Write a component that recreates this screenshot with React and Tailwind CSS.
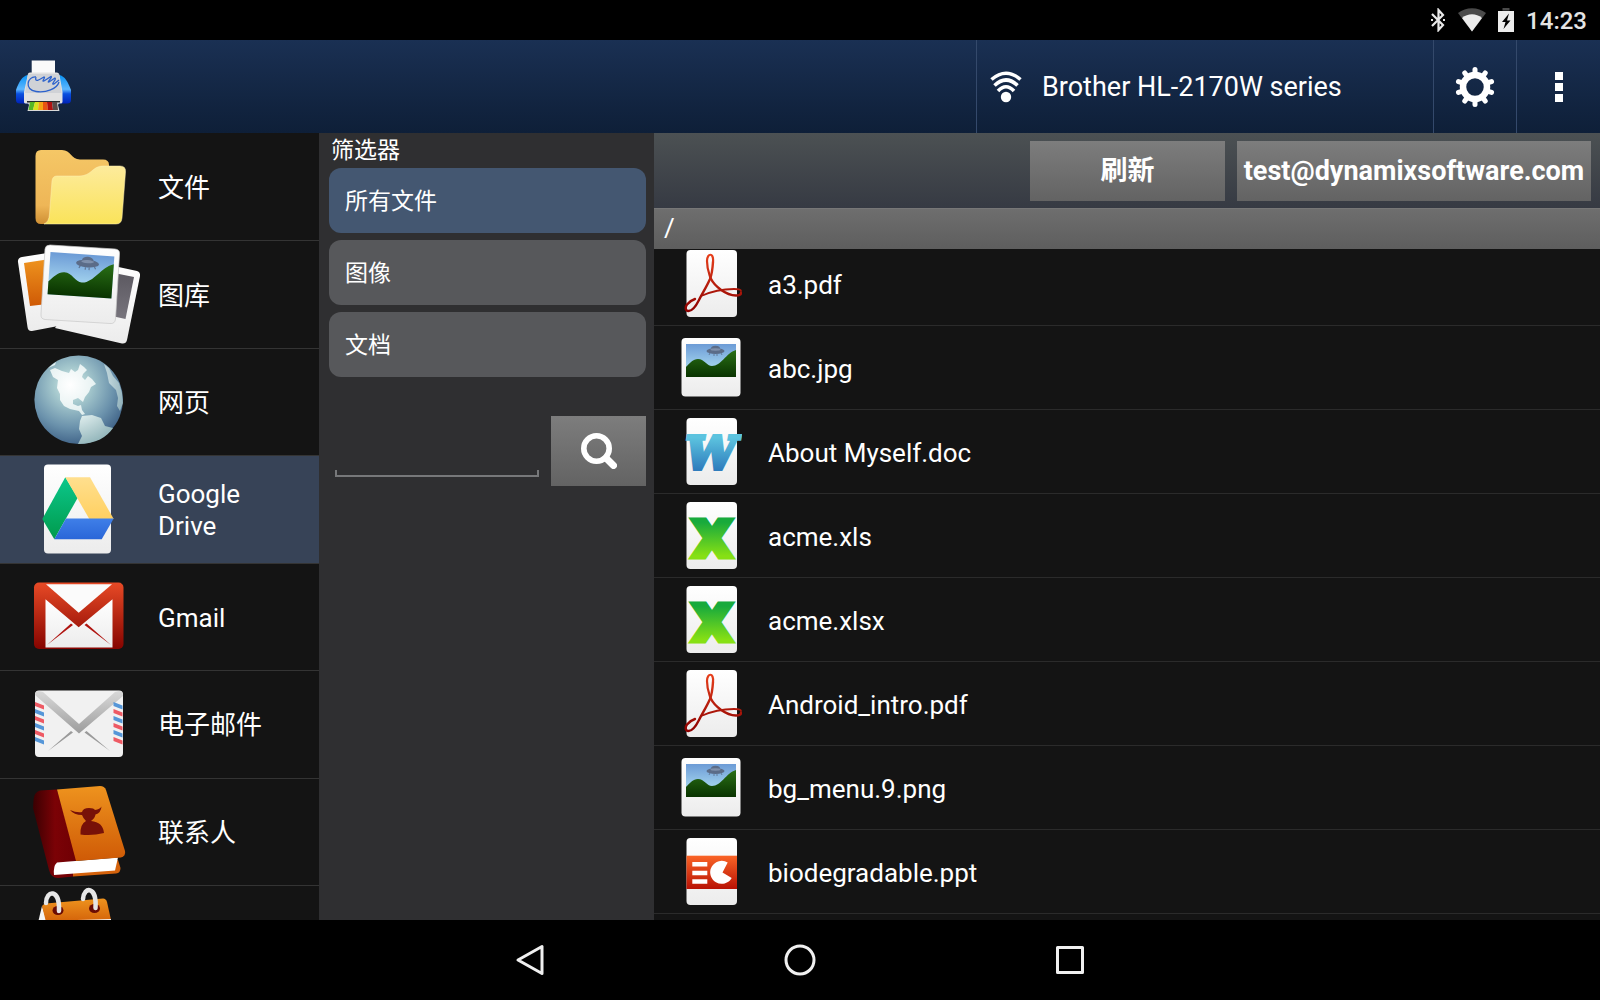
// src/App.jsx

import React, { useState } from 'react';

// Gradients shared by all the icons below
const IconDefs = () => (
    <svg className="absolute h-0 w-0" aria-hidden="true">
        <defs>
            <linearGradient id="paper" x1="0" y1="0" x2="0" y2="1">
                <stop offset="0" stopColor="#ffffff" />
                <stop offset="1" stopColor="#ececec" />
            </linearGradient>
            <linearGradient id="sky" x1="0" y1="0" x2="0" y2="1">
                <stop offset="0" stopColor="#6c9bd6" />
                <stop offset="0.7" stopColor="#a3d3ee" />
            </linearGradient>
            <linearGradient id="hills" x1="0" y1="0" x2="0" y2="1">
                <stop offset="0" stopColor="#2a7016" />
                <stop offset="1" stopColor="#093300" />
            </linearGradient>
            <linearGradient id="folderBack" x1="0" y1="0" x2="0" y2="1">
                <stop offset="0" stopColor="#f5c766" />
                <stop offset="0.75" stopColor="#eeb657" />
                <stop offset="1" stopColor="#cf8f34" />
            </linearGradient>
            <linearGradient id="folderFront" x1="0" y1="0" x2="0" y2="1">
                <stop offset="0" stopColor="#fdeb9c" />
                <stop offset="1" stopColor="#fae35a" />
            </linearGradient>
            <linearGradient id="orange" x1="0" y1="0" x2="0" y2="1">
                <stop offset="0" stopColor="#ee931e" />
                <stop offset="1" stopColor="#cf5a06" />
            </linearGradient>
            <linearGradient id="gray" x1="0" y1="0" x2="0" y2="1">
                <stop offset="0" stopColor="#5b5860" />
                <stop offset="1" stopColor="#77747c" />
            </linearGradient>
            <radialGradient id="globe" cx="0.42" cy="0.34" r="0.68">
                <stop offset="0" stopColor="#d9efec" />
                <stop offset="0.3" stopColor="#a5c8cd" />
                <stop offset="0.7" stopColor="#6b92ac" />
                <stop offset="1" stopColor="#3f6287" />
            </radialGradient>
            <radialGradient id="land" gradientUnits="userSpaceOnUse" cx="70" cy="36" r="64">
                <stop offset="0" stopColor="#ffffff" />
                <stop offset="0.5" stopColor="#e0eeee" />
                <stop offset="1" stopColor="#8fb3b8" />
            </radialGradient>
            <linearGradient id="driveGreen" x1="0" y1="0" x2="0" y2="1">
                <stop offset="0" stopColor="#0cc78b" />
                <stop offset="1" stopColor="#009a4c" />
            </linearGradient>
            <linearGradient id="driveYellow" x1="0" y1="0" x2="0" y2="1">
                <stop offset="0" stopColor="#ffdf8e" />
                <stop offset="1" stopColor="#ffd061" />
            </linearGradient>
            <linearGradient id="driveBlue" x1="0" y1="0" x2="0" y2="1">
                <stop offset="0" stopColor="#3f7fe8" />
                <stop offset="1" stopColor="#2a66d8" />
            </linearGradient>
            <linearGradient id="gmailRed" x1="0" y1="0" x2="0" y2="1">
                <stop offset="0" stopColor="#e74a26" />
                <stop offset="1" stopColor="#860400" />
            </linearGradient>
            <linearGradient id="flap" x1="0" y1="0" x2="0" y2="1">
                <stop offset="0" stopColor="#d9d9d9" />
                <stop offset="1" stopColor="#9c9c9c" />
            </linearGradient>
            <linearGradient id="spine" x1="0" y1="0" x2="1" y2="0">
                <stop offset="0" stopColor="#3a0002" />
                <stop offset="0.5" stopColor="#7b0206" />
                <stop offset="1" stopColor="#6f0004" />
            </linearGradient>
            <linearGradient id="pdfRed" gradientUnits="userSpaceOnUse" x1="0" y1="12" x2="0" y2="70">
                <stop offset="0" stopColor="#e8401c" />
                <stop offset="1" stopColor="#8c0000" />
            </linearGradient>
            <linearGradient id="wordBlue" x1="0" y1="0" x2="0" y2="1">
                <stop offset="0.2" stopColor="#5cc3df" />
                <stop offset="0.8" stopColor="#2f7dbd" />
            </linearGradient>
            <linearGradient id="excelGreen" x1="0" y1="0" x2="0" y2="1">
                <stop offset="0.2" stopColor="#18aa3c" />
                <stop offset="0.8" stopColor="#86e014" />
            </linearGradient>
            <linearGradient id="pptRed" x1="0" y1="0" x2="0" y2="1">
                <stop offset="0" stopColor="#fa6426" />
                <stop offset="1" stopColor="#b81205" />
            </linearGradient>
            <linearGradient id="wing" x1="0" y1="0" x2="0" y2="1">
                <stop offset="0" stopColor="#0a93f5" />
                <stop offset="0.5" stopColor="#5db7ff" />
                <stop offset="0.66" stopColor="#0a50e0" />
                <stop offset="1" stopColor="#0022b8" />
            </linearGradient>
        </defs>
    </svg>
);

// 50x33 landscape with a flying saucer, used by the photo icons
const Landscape = () => (
    <>
        <rect width="50" height="33" fill="url(#sky)" />
        <path d="M0 23 C4 19 7 15 12 15 C18 15 21 22 26 22 C35 22 40 9 50 6 V33 H0 Z" fill="url(#hills)" />
        <g fill="#5b6c88">
            <ellipse cx="29.500" cy="7" rx="9" ry="3" />
            <ellipse cx="29.500" cy="4.500" rx="4.500" ry="2.800" />
            <path d="M24 9 l-1 2 M28 10 v2 M31 10 v2 M35 9 l1 2" stroke="#5b6c88" strokeWidth="0.800" />
        </g>
        <ellipse cx="29.500" cy="5.500" rx="5" ry="1.200" fill="#7f90ab" />
    </>
);

const FolderIcon = () => (
    <>
        <path d="M41 16 H62 C71 16 71 25.500 80 25.500 H103 Q109 25.500 109 31 V84 Q109 90 103 90 H41 Q35.500 90 35.500 84 V22 Q35.500 16 41 16 Z" fill="url(#folderBack)" />
        <path d="M57 42 H79 C92 42 92 32 103 32 H120 Q126 32 125.500 38 L122 84 Q121.500 90 116 90 H44 Q49 88 49.500 80 L52 47 Q52.500 42 57 42 Z" fill="url(#folderFront)" stroke="#fff0b5" strokeWidth="0.500" />
    </>
);

const GalleryIcon = () => (
    <>
        <path d="M22 16 L60 10 L74 82 L32 90 Q28 90.500 27.500 86 L18 21 Q17.500 17 22 16 Z" fill="url(#paper)" />
        <path d="M24 22 L50 18 L56 62 L30 65 Z" fill="url(#orange)" />
        <path d="M100 22 L137 30 Q140.500 31 140 35 L127 99 Q126 103 122 102.500 L55 87 Z" fill="url(#paper)" />
        <path d="M104 30 L134 36 L125.500 78 L98 72 Z" fill="url(#gray)" />
        <path d="M50 4 L115 8 Q120 8.500 119.500 13 L115.500 78 Q115 83 110 82.500 L45 78.500 Q40.500 78 41 73 L45 8 Q45.500 4 50 4 Z" fill="url(#paper)" stroke="#c9c9c9" strokeWidth="0.700" />
        <g transform="translate(50.500 11) rotate(4) scale(1.280)">
            <Landscape />
        </g>
    </>
);

const GlobeIcon = () => (
    <>
        <circle cx="78.700" cy="50.700" r="44.300" fill="url(#globe)" />
        <path d="M50 21 L55 19 L62 22 L69 24 L71 20 L75 23 L78 21 L80 15 L84 18 L87 21 L83 25 L82 28 L85 31 L88 27 L92 30 L96 35 L91 38 L89 43 L85 48 L83 53 L78 49 L73 51 L73 55 L78 57 L81 56 L82 61 L85 65 L82 66 L79 62 L70 60 L64 57 L60 51 L60 45 L57 39 L58 31 L53 28 Z" fill="url(#land)" />
        <path d="M82 67 L92 66 L101 69 L105 77 L113 79 C107 88 96 95 78 95 L82 87 L79 80 L80 72 Z" fill="url(#land)" />
        <path d="M104 15 L109 19 L113 27 L119 34 L122 44 L123 54 L120 62 L117 57 L118 49 L116 41 L109 34 L107 24 Z" fill="url(#land)" opacity="0.800" />
        <path d="M48 19 L56 13 L55 16 Z" fill="url(#land)" />
    </>
);

const DriveIcon = () => (
    <>
        <rect x="44" y="8.500" width="67" height="89" rx="4" fill="url(#paper)" />
        <path d="M65.300 21.300 L77.700 41.700 L54.300 83.300 L42.300 63 Z" fill="url(#driveGreen)" />
        <path d="M65.300 21.300 H90 L113.700 63 H89.300 Z" fill="url(#driveYellow)" />
        <path d="M66 62.600 H113.700 L101.700 83.300 H54.300 Z" fill="url(#driveBlue)" />
    </>
);

const GmailIcon = () => (
    <>
        <rect x="34" y="19.500" width="89.500" height="66.500" rx="5" fill="url(#gmailRed)" />
        <path d="M46 21.300 H112 L78.700 49.700 Z" fill="#fbfbfb" />
        <path d="M45.500 36.300 L78.700 64.300 L112.500 36.300 V84.500 H45.500 Z" fill="url(#paper)" />
        <path d="M71 60.500 L73 62 L47 82 Z M86.500 60.500 L84.500 62 L111 82 Z" fill="#b01410" />
    </>
);

const MailIcon = () => (
    <>
        <rect x="35" y="19.500" width="88" height="66.500" rx="4" fill="#f1f1f1" />
        <path d="M35 24 Q35 20 39 20 L43 21 L79 53 L115 21 L119 20 Q123 20 123 25 L79 62.500 Z" fill="url(#flap)" />
        <path d="M71 60 L73 61.500 L48 80 Z M86.500 60 L84.500 61.500 L110 80 Z" fill="#9a9a9a" />
        {[0, 1, 2, 3, 4, 5].map((i) => (
            <g key={i} transform={`translate(0 ${i * 7})`}>
                <path d="M35 31 L44 34.500 V38.500 L35 35 Z" fill={i % 2 ? '#5596d8' : '#ee5a64'} />
                <path d="M113.500 31 L122.500 34.500 V38.500 L113.500 35 Z" fill={i % 2 ? '#ee5a64' : '#5596d8'} />
            </g>
        ))}
    </>
);

const ContactsIcon = () => (
    <>
        <path d="M118 82 L120.500 90 Q120.500 95 116 95.500 L73 98.500 L70 88 Z" fill="#d4620c" />
        <path d="M57 11.500 L40 12.500 Q34 14 33.500 22 L33 30 L49 92 Q51 100 58 100 L73 98.500 V84 L77 82 Z" fill="url(#spine)" />
        <path d="M57 84.500 L118 79.500 L115 92.500 L54 97 Q53 88 57 84.500 Z" fill="#ffffff" />
        <path d="M57 11.500 L100 8 Q104.500 8 106 12 L125 73 Q126 78 121 79.500 L76 83 Z" fill="url(#orange)" />
        <path d="M70 32 Q77 35 82 34 Q83 30 89 30 Q94 30 95 32 Q100 31 101.500 28.500 Q101 35 95.500 36.500 Q95 40 91 43 Q103 44 104 55 Q92 58 80.500 56.500 Q80 46 86 43 Q83 40 82 37 Q74 37 70 32 Z" fill="#771108" />
    </>
);

const CalendarIcon = () => (
    <>
        <path d="M42 20 L36 45 H50 Z" fill="#f4f4f4" />
        <path d="M46 17.500 L103 12.500 Q106 12.500 107 16 L111 34 L110 40 H47 L42 20 Q43 18 46 17.500 Z" fill="url(#orange)" />
        <path d="M60 34.500 L111 33 V40 H58 Z" fill="#f4f4f4" />
        <ellipse cx="58" cy="24.500" rx="5.500" ry="4.500" fill="#6a0c04" />
        <ellipse cx="94.500" cy="22.500" rx="5.500" ry="4.500" fill="#6a0c04" />
        <path d="M46 17 C46 4 60 2 59 25 M83 13 C84 0 97 0 95.500 22" fill="none" stroke="#e6e6e6" strokeWidth="4.500" strokeLinecap="round" />
    </>
);

const Page = () => <rect x="6.500" y="8" width="50.500" height="67" rx="4" fill="url(#paper)" />;

const PdfIcon = () => (
    <>
        <Page />
        <g fill="none" stroke="url(#pdfRed)" strokeLinecap="round">
            <path d="M33 20 C34 10 27 11 27 19 C27 27 29 31 30.500 36" strokeWidth="2.200" />
            <path d="M33 20 C32.500 28 32 32 30 37 C27 44 22 52 19 58 C16 64 12 69 8.500 69 C5 69 5 65 7 62.500 C9 60 12 58 15 57" strokeWidth="2.400" />
            <path d="M30.500 36 C35 45 46 53 56 53.500 C59 53.500 61 52.500 61 51" strokeWidth="2.400" />
            <path d="M21 54 C30 50 44 47 54 47 C58 47 61 47.500 61 49" strokeWidth="1.800" />
        </g>
    </>
);

const ImageIcon = () => (
    <>
        <rect x="1.500" y="12" width="59" height="58.500" rx="4" fill="url(#paper)" />
        <g transform="translate(6 18)">
            <Landscape />
        </g>
    </>
);

const WordIcon = () => (
    <>
        <Page />
        <text x="31" y="59" textAnchor="middle" className="text-[45px] font-bold italic [font-family:'DejaVu_Serif',serif]" fill="url(#wordBlue)" stroke="url(#wordBlue)" strokeWidth="4">W</text>
    </>
);

const ExcelIcon = () => (
    <>
        <Page />
        <text x="32" y="62" textAnchor="middle" className="text-[48px] font-bold [font-family:'DejaVu_Sans',sans-serif]" fill="url(#excelGreen)" stroke="url(#excelGreen)" strokeWidth="7">X</text>
    </>
);

const PptIcon = () => (
    <>
        <Page />
        <rect x="6.500" y="25.700" width="50.500" height="33.300" fill="url(#pptRed)" />
        <path d="M12.300 32 h15 v4.500 h-15 Z M12.300 40.700 h15 v4.500 h-15 Z M12.300 49.200 h15 v4.500 h-15 Z" fill="#ffffff" />
        <path d="M47.700 32.500 A11.500 11.500 0 1 0 51.700 48 L42.500 42.500 Z" fill="#ffffff" />
    </>
);

const sources = [
    { label: '文件', Icon: FolderIcon },
    { label: '图库', Icon: GalleryIcon },
    { label: '网页', Icon: GlobeIcon },
    { label: 'Google Drive', Icon: DriveIcon },
    { label: 'Gmail', Icon: GmailIcon },
    { label: '电子邮件', Icon: MailIcon },
    { label: '联系人', Icon: ContactsIcon },
];

const filters = ['所有文件', '图像', '文档'];

const files = [
    { name: 'a3.pdf', Icon: PdfIcon },
    { name: 'abc.jpg', Icon: ImageIcon },
    { name: 'About Myself.doc', Icon: WordIcon },
    { name: 'acme.xls', Icon: ExcelIcon },
    { name: 'acme.xlsx', Icon: ExcelIcon },
    { name: 'Android_intro.pdf', Icon: PdfIcon },
    { name: 'bg_menu.9.png', Icon: ImageIcon },
    { name: 'biodegradable.ppt', Icon: PptIcon },
];

const StatusBar = () => (
    <div className="flex h-10 shrink-0 items-center justify-end bg-black pr-[13px]">
        <svg className="mr-3 h-6 w-4" viewBox="0 0 16 24" fill="none" stroke="#e8e8e8" strokeWidth="2.200">
            <path d="M2 6 L13 17 L8.500 22 V2 L13 7 L2 18" />
            <path d="M1 12 h2 M13 12 h2" />
        </svg>
        <svg className="mr-3 h-6 w-7" viewBox="0 0 28 24">
            <path d="M0 5 C8 -1.500 20 -1.500 28 5 L14 23.500 Z" fill="#4a4a4a" />
            <path d="M4 10 C10 5 18 5 24 10 L14 23.500 Z" fill="#ececec" />
        </svg>
        <svg className="mr-3 h-6 w-4" viewBox="0 0 16 24">
            <path d="M4.500 0 h7 v2.500 h-7 Z" fill="#4a4a4a" />
            <path d="M0 3 h16 v21 H0 Z" fill="#ececec" />
            <path d="M11 5.500 L4 14 H7.500 L5.500 21 L12.500 12.500 H9 Z" fill="#000000" />
        </svg>
        <time className="pt-[2px] text-[24px] leading-8 font-medium text-[#e4e4e4]">14:23</time>
    </div>
);

const Header = () => (
    <header className="flex h-[93px] shrink-0 bg-linear-to-b from-[#1a3053] to-[#0e1f38]">
        <div className="flex-1">
            <svg className="h-[93px] w-[90px]" viewBox="0 0 90 93" role="img" aria-label="PrintHand">
                <path d="M28 35 C22 36 19 42 16 50 V60 Q16 64 21 63.500 H30 Z" fill="url(#wing)" />
                <path d="M59 35 C65 36 68 42 71 50 V60 Q71 64 66 63.500 H57 Z" fill="url(#wing)" />
                <path d="M31.700 20.500 H55 V35 H31.700 Z" fill="#fafafa" />
                <path d="M28 34 Q28 32.500 30 32.500 H57 Q59 32.500 59.500 35 L62.500 52 V62 Q62.500 63.500 60 63.500 H27 Q24 63.500 24 62 V52 Z" fill="#e2e2e2" />
                <path d="M28 34 H59 L61.500 53 H25 Z" fill="#d0d2d6" />
                <path d="M36 37 C27 36 24 50 36 51.500 C46 53 57 49 59 42 M36 37 C34 44 42 38 44 37 C46 37 41 42 44 41 L51 36.500 C53 37 46 43 49 42 L55 38 C57 39 50 45 54 44 L59 40" fill="none" stroke="#2c62cc" strokeWidth="1.300" />
                <path d="M27 61 H60 L58 65 L59.500 71 H27.500 L29 65 Z" fill="#d9d9d9" />
                <path d="M27 61 H60 V62.500 H27 Z" fill="#26282c" />
                <path d="M30 62 H35 L33 70 H28.500 Z" fill="#56b524" />
                <path d="M35 62 H39 L38 70 H33 Z" fill="#d8e01c" />
                <path d="M39 62 H43 V70 H38 Z" fill="#f5a313" />
                <path d="M43 62 H47 L48 70 H43 Z" fill="#e85312" />
                <path d="M47 62 H52 L53 70 H48 Z" fill="#b01010" />
                <path d="M52 62 H57 L58 70 H53 Z" fill="#5a4a48" />
            </svg>
        </div>
        <button className="flex w-[457px] items-center gap-5 border-l border-[#34496b] pl-[13px] text-left text-[27px] text-white">
            <svg className="h-8 w-8" viewBox="0 0 32 32" fill="none" stroke="#ffffff" strokeWidth="3.600">
                <path d="M1.500 8.500 Q16 -4 30.500 8.500" />
                <path d="M4.500 14.500 Q16 3.500 27.500 14.500" />
                <path d="M8 20 Q16 11.500 24 20" />
                <circle cx="16" cy="26" r="5.200" fill="#ffffff" stroke="none" />
            </svg>
            <span className="pt-[2px]">Brother HL-2170W series</span>
        </button>
        <button className="flex w-[83px] items-center justify-center border-l border-[#34496b]" aria-label="设置">
            <svg className="h-10 w-10" viewBox="-20 -20 40 40" fill="none" stroke="#ffffff">
                <circle r="12" strokeWidth="6.500" />
                {[0, 36, 72, 108, 144, 180, 216, 252, 288, 324].map((deg) => (
                    <path key={deg} d="M0 -14 V-17.400" strokeWidth="5" strokeLinecap="round" transform={`rotate(${deg})`} />
                ))}
            </svg>
        </button>
        <button className="flex w-[84px] flex-col items-center justify-center gap-[3px] border-l border-[#34496b]" aria-label="更多">
            <span className="h-2 w-2 bg-white" />
            <span className="h-2 w-2 bg-white" />
            <span className="h-2 w-2 bg-white" />
        </button>
    </header>
);

const SourceList = ({ active, onSelect }) => (
    <nav className="flex w-[319px] shrink-0 flex-col overflow-hidden bg-[#141414] pt-px">
        {sources.map(({ label, Icon }) => (
            <button
                key={label}
                onClick={() => onSelect(label)}
                className={`flex min-h-0 flex-1 items-center border-b border-[#343434] text-left text-[26px] leading-8 text-white ${active === label ? 'bg-[#374357]' : ''}`}
            >
                <svg className="h-[107px] w-[158px] shrink-0" viewBox="0 0 158 107">
                    <Icon />
                </svg>
                <span className="pt-[2px] pr-8">{label}</span>
            </button>
        ))}
        {/* Next entry, only its top is in view */}
        <button className="h-[34px] shrink-0 overflow-hidden" aria-label="日历">
            <svg className="h-[107px] w-[158px]" viewBox="0 0 158 107">
                <CalendarIcon />
            </svg>
        </button>
    </nav>
);

const FilterPanel = ({ active, onSelect }) => (
    <aside className="w-[335px] shrink-0 bg-[#2f2f31] pr-2 pl-[10px] text-[23px] text-white">
        <h2 className="h-[35px] pl-[2px] leading-[35px]">筛选器</h2>
        <div className="flex flex-col gap-[7px]">
            {filters.map((label) => (
                <button
                    key={label}
                    onClick={() => onSelect(label)}
                    className={`h-[65px] rounded-xl px-4 pt-1 text-left ${active === label ? 'bg-[#445771]' : 'bg-[#57585b]'}`}
                >
                    {label}
                </button>
            ))}
        </div>
        <form className="mt-[39px] flex items-end gap-3" onSubmit={(e) => e.preventDefault()}>
            <div className="mb-[9px] ml-[6px] min-w-0 flex-1">
                <input type="text" aria-label="搜索" className="block h-10 w-full bg-transparent px-2 outline-none" />
                <div className="h-[7px] border-x-2 border-b-2 border-[#77787a]" />
            </div>
            <button aria-label="搜索" className="flex h-[70px] w-[95px] items-center justify-center bg-linear-to-b from-[#7d7d7d] to-[#636363]">
                <svg className="h-9 w-9" viewBox="0 0 36 36" fill="none" stroke="#ffffff">
                    <circle cx="15.500" cy="15.500" r="12.700" strokeWidth="5.600" />
                    <path d="M25 25 L32.500 32.500" strokeWidth="7" strokeLinecap="round" />
                </svg>
            </button>
        </form>
    </aside>
);

const FileBrowser = () => (
    <main className="flex min-w-0 flex-1 flex-col bg-[#141414] text-white">
        <div className="flex h-[75px] shrink-0 items-center justify-end gap-3 bg-linear-to-b from-[#4c5153] to-[#363a43] pr-[9px] text-[27px] font-bold">
            <button className="h-[60px] w-[195px] bg-linear-to-b from-[#7d7d7d] to-[#636363] pt-[2px]">刷新</button>
            <button className="h-[60px] w-[354px] bg-linear-to-b from-[#7d7d7d] to-[#636363] pt-[2px]">test@dynamixsoftware.com</button>
        </div>
        <div className="h-[41px] shrink-0 border-t border-[#777777] bg-linear-to-b from-[#6e6e6e] to-[#5e5e5e] pl-[10px] text-[26px] leading-[38px]">/</div>
        <div className="min-h-0 flex-1 overflow-hidden">
            {/* List is scrolled down by a few pixels */}
            <ul className="-mt-[7px]">
                {files.map(({ name, Icon }) => (
                    <li key={name} className="border-b border-[#2b2b2b]">
                        <button className="flex h-[83px] w-full items-center gap-[26px] pl-[26px] text-left text-[26px]">
                            <svg className="h-[84px] w-[62px] shrink-0" viewBox="0 0 62 84">
                                <Icon />
                            </svg>
                            <span className="pt-[3px]">{name}</span>
                        </button>
                    </li>
                ))}
            </ul>
        </div>
    </main>
);

const NavigationBar = () => (
    <footer className="flex h-20 shrink-0 items-center justify-center bg-black">
        <button aria-label="返回" className="flex w-[270px] justify-center">
            <svg className="h-8 w-8" viewBox="0 0 32 32" fill="none" stroke="#f0f0f0" strokeWidth="3" strokeLinejoin="round">
                <path d="M28 2.500 V29.500 L4 16 Z" />
            </svg>
        </button>
        <button aria-label="主屏幕" className="flex w-[270px] justify-center">
            <svg className="h-8 w-8" viewBox="0 0 32 32" fill="none" stroke="#f0f0f0" strokeWidth="3">
                <circle cx="16" cy="16" r="14" />
            </svg>
        </button>
        <button aria-label="最近任务" className="flex w-[270px] justify-center">
            <svg className="h-8 w-8" viewBox="0 0 32 32" fill="none" stroke="#f0f0f0" strokeWidth="3" strokeLinejoin="round">
                <path d="M3.500 3.500 h25 v25 h-25 Z" />
            </svg>
        </button>
    </footer>
);

const App = () => {
    const [source, setSource] = useState('Google Drive');
    const [filter, setFilter] = useState('所有文件');

    return (
        <div className="flex h-screen flex-col overflow-hidden bg-black [font-family:Roboto,'Noto_Sans_CJK_SC',sans-serif]">
            <IconDefs />
            <StatusBar />
            <Header />
            <div className="flex min-h-0 flex-1">
                <SourceList active={source} onSelect={setSource} />
                <FilterPanel active={filter} onSelect={setFilter} />
                <FileBrowser />
            </div>
            <NavigationBar />
        </div>
    );
};

export default App;
